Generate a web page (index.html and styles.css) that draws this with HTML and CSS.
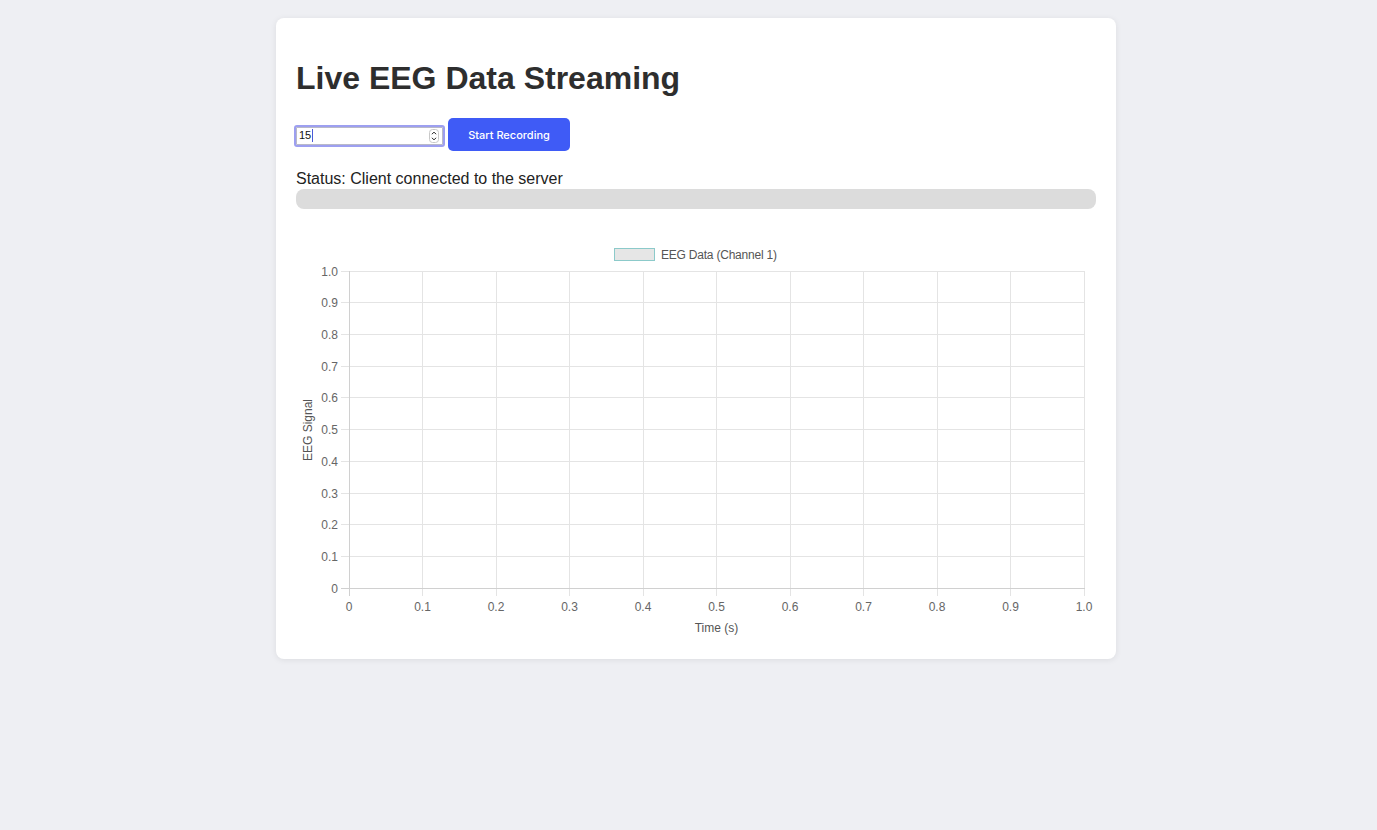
FILE: index.html
```html
<!DOCTYPE html>
<html lang="en">
<head>
<meta charset="utf-8">
<title>Live EEG Data Streaming</title>
<link rel="stylesheet" href="styles.css">
</head>
<body>
<main class="card">
  <h1 class="title">Live EEG Data Streaming</h1>
  <div class="controls">
    <div class="num-input">
      <span class="num-value">15</span><span class="caret"></span>
      <span class="spinner">
        <svg width="10" height="14" viewBox="0 0 10 14">
          <rect x="0.5" y="0.5" width="9" height="13" rx="3" fill="#fff" stroke="#c8c8c8"/>
          <path d="M2.8 5.2 L5 3.2 L7.2 5.2" fill="none" stroke="#333" stroke-width="1"/>
          <path d="M2.8 8.8 L5 10.8 L7.2 8.8" fill="none" stroke="#333" stroke-width="1"/>
        </svg>
      </span>
    </div>
    <button class="btn">Start Recording</button>
  </div>
  <p class="status">Status: Client connected to the server</p>
  <div class="progress"></div>
  <div class="chart">
    <svg width="800" height="400" viewBox="0 0 800 400" class="chart-svg">
      <g class="legend">
        <rect x="318.5" y="9.5" width="40" height="12" fill="#e6e6e6" stroke="#8ccaca" stroke-width="1"/>
        <text x="365" y="19.5" textLength="116">EEG Data (Channel 1)</text>
      </g>
      <g class="grid" stroke="#e4e4e4" stroke-width="1">
        <line x1="126.5" y1="32" x2="126.5" y2="357"/>
        <line x1="200.5" y1="32" x2="200.5" y2="357"/>
        <line x1="273.5" y1="32" x2="273.5" y2="357"/>
        <line x1="347.5" y1="32" x2="347.5" y2="357"/>
        <line x1="420.5" y1="32" x2="420.5" y2="357"/>
        <line x1="494.5" y1="32" x2="494.5" y2="357"/>
        <line x1="567.5" y1="32" x2="567.5" y2="357"/>
        <line x1="641.5" y1="32" x2="641.5" y2="357"/>
        <line x1="714.5" y1="32" x2="714.5" y2="357"/>
        <line x1="788.5" y1="32" x2="788.5" y2="357"/>
        <line x1="45" y1="32.5" x2="789" y2="32.5"/>
        <line x1="45" y1="63.5" x2="789" y2="63.5"/>
        <line x1="45" y1="95.5" x2="789" y2="95.5"/>
        <line x1="45" y1="127.5" x2="789" y2="127.5"/>
        <line x1="45" y1="158.5" x2="789" y2="158.5"/>
        <line x1="45" y1="190.5" x2="789" y2="190.5"/>
        <line x1="45" y1="222.5" x2="789" y2="222.5"/>
        <line x1="45" y1="254.5" x2="789" y2="254.5"/>
        <line x1="45" y1="285.5" x2="789" y2="285.5"/>
        <line x1="45" y1="317.5" x2="789" y2="317.5"/>
      </g>
      <g class="axes" stroke="#d0d0d0" stroke-width="1">
        <line x1="53.5" y1="32" x2="53.5" y2="357"/>
        <line x1="45" y1="349.5" x2="789" y2="349.5"/>
      </g>
      <g class="ylabels" text-anchor="end">
        <text x="42" y="36.5">1.0</text>
        <text x="42" y="68">0.9</text>
        <text x="42" y="100">0.8</text>
        <text x="42" y="131.5">0.7</text>
        <text x="42" y="163">0.6</text>
        <text x="42" y="195">0.5</text>
        <text x="42" y="227">0.4</text>
        <text x="42" y="258.5">0.3</text>
        <text x="42" y="290">0.2</text>
        <text x="42" y="322">0.1</text>
        <text x="42" y="353.5">0</text>
      </g>
      <g class="xlabels" text-anchor="middle">
        <text x="53" y="372">0</text>
        <text x="126.5" y="372">0.1</text>
        <text x="200" y="372">0.2</text>
        <text x="273.5" y="372">0.3</text>
        <text x="347" y="372">0.4</text>
        <text x="420.5" y="372">0.5</text>
        <text x="494" y="372">0.6</text>
        <text x="567.5" y="372">0.7</text>
        <text x="641" y="372">0.8</text>
        <text x="714.5" y="372">0.9</text>
        <text x="788" y="372">1.0</text>
      </g>
      <text class="axis-title" x="420.5" y="393" text-anchor="middle">Time (s)</text>
      <text class="axis-title" x="0" y="0" text-anchor="middle" transform="translate(16 191) rotate(-90)">EEG Signal</text>
    </svg>
  </div>
</main>
</body>
</html>
```

FILE: styles.css
```css
html, body {
  margin: 0;
  padding: 0;
}
body {
  background: #eeeff3;
  font-family: "Liberation Sans", Arial, Helvetica, sans-serif;
  color: #333;
  min-height: 830px;
  padding: 18px 0 0 276px;
  box-sizing: border-box;
}
.card {
  width: 840px;
  box-sizing: border-box;
  background: #fff;
  border-radius: 8px;
  box-shadow: 0 1px 6px rgba(0, 0, 0, 0.08);
  padding: 20px;
}
.title {
  font-size: 32px;
  font-weight: bold;
  color: #2e2e2e;
  margin: 22px 0 21px;
  line-height: 37px;
}
.controls {
  display: flex;
  align-items: center;
  gap: 3px;
  height: 33px;
  margin-left: -2px;
}
.num-input {
  width: 151px;
  height: 22px;
  box-sizing: border-box;
  border: 2px solid #9d9ff0;
  border-radius: 3px;
  background: #fff;
  display: flex;
  align-items: center;
  padding: 0 4px 0 3px;
  font-family: "Liberation Sans", Arial, sans-serif;
  font-size: 11px;
  color: #111;
  box-shadow: inset 0 0 0 1px #b9b9c8;
  margin-top: 2px;
}
.num-value {
  line-height: 13px;
}
.caret {
  width: 1px;
  height: 13px;
  background: #4a5ad8;
  margin-left: 1px;
}
.spinner {
  margin-left: auto;
  display: flex;
  align-items: center;
}
.btn {
  width: 122px;
  height: 33px;
  border: none;
  border-radius: 5px;
  background: #3f5bf6;
  color: #fff;
  font-family: Inter, "Open Sans", sans-serif;
  font-size: 11px;
  font-weight: 500;
  padding: 0;
  cursor: pointer;
}
.status {
  margin: 19px 0 0;
  font-size: 16px;
  line-height: 18px;
  color: #222;
}
.progress {
  height: 20px;
  margin-top: 1px;
  background: #dcdcdc;
  border-radius: 8px;
}
.chart {
  margin-top: 30px;
  height: 400px;
}
.chart-svg {
  display: block;
  font-family: "Liberation Sans", Arial, sans-serif;
  font-size: 12px;
  fill: #666;
}
.legend text {
  fill: #555;
}
.axis-title {
  fill: #555;
}
```
